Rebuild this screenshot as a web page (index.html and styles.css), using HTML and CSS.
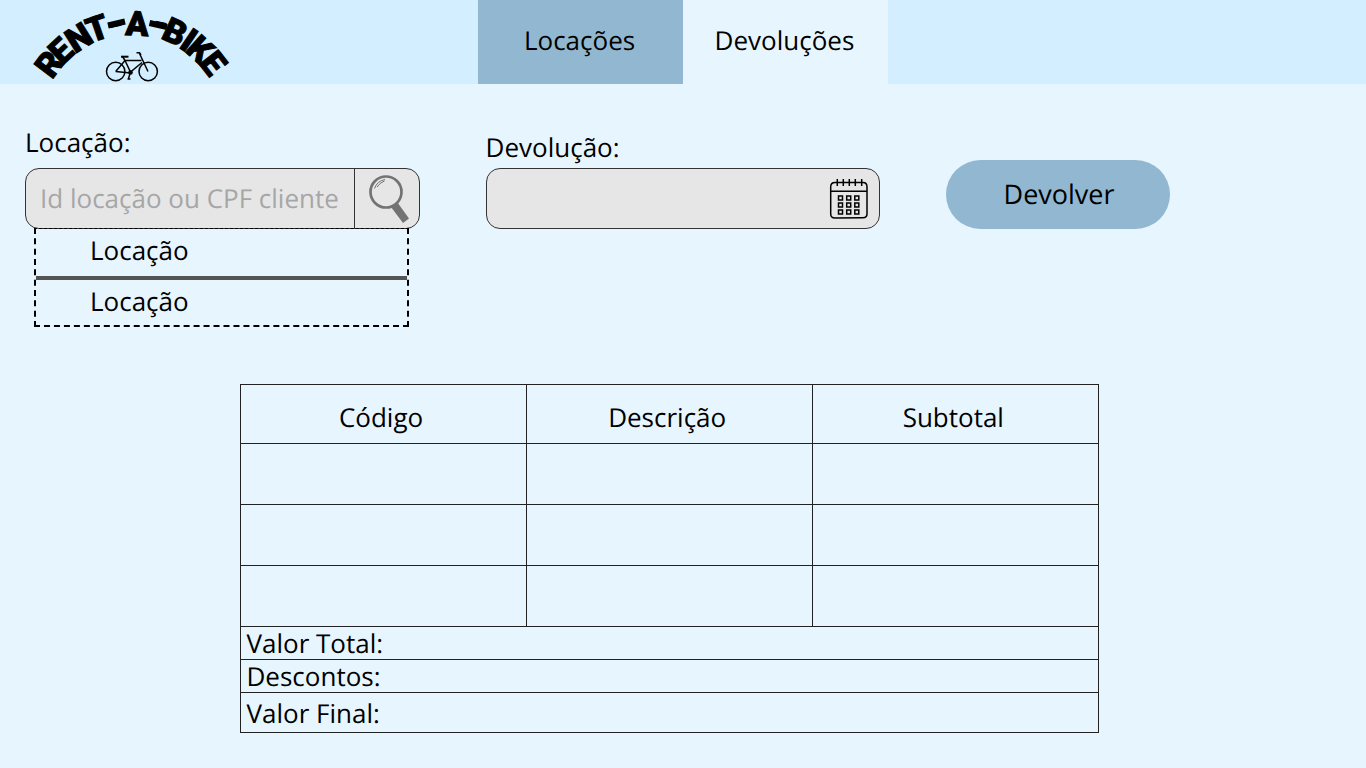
FILE: index.html
```html
<!DOCTYPE html>
<html lang="pt-BR">
<head>
<meta charset="utf-8">
<meta name="viewport" content="width=device-width, initial-scale=1">
<title>Rent-a-Bike - Devoluções</title>
<link rel="stylesheet" href="styles.css">
</head>
<body>
<header class="topbar">
  <svg class="logo" viewBox="0 0 240 84" role="img" aria-label="RENT-A-BIKE">
    <text class="logo-text" x="52 62 75 91 110 125 151 160 178 184 198" y="80 66 54 43 36 35 33 38 47 51 63" rotate="-53 -43 -32 -19 -12 3 12 25 34 42 52">RENT-A-BIKE</text>
    <path class="logo-dash" d="M108 25.500L125 21.500M149.500 23L167 27"/>
    <g class="logo-bike">
      <circle cx="115.7" cy="71.5" r="9.2"/>
      <circle cx="148.2" cy="71.5" r="9.2"/>
      <path d="M115.7 71.5L125 60.5H141.500M125 60.500L130.500 72L142 62.500M115.700 71.500L130.500 73M125 60.500L122.500 56.500M148 71.500L139.500 53.500M136.500 52.700H139.500L141 55M130.500 72L128.500 78.500M127.500 79H130.500"/>
      <path class="logo-seat" d="M121 56.700H128.500"/>
      <circle class="logo-hub" cx="130.500" cy="72.500" r="1.600"/>
    </g>
  </svg>
  <nav class="tabs">
    <a class="tab" href="#locacoes">Locações</a>
    <a class="tab tab-current" href="#devolucoes" aria-current="page">Devoluções</a>
  </nav>
</header>
<main class="content">
  <form class="return-form">
    <div class="field">
      <label class="label" for="rental">Locação:</label>
      <div class="control">
        <input class="input" id="rental" type="text" placeholder="Id locação ou CPF cliente">
        <button class="search-button" type="button" aria-label="Buscar">
          <svg class="search-icon" viewBox="0 0 44 50" aria-hidden="true">
            <circle cx="18" cy="18" r="15.500" fill="none" stroke="#737373" stroke-width="2.700"/>
            <path d="M6.500 14.500Q9 7 17 5.500M9 13Q12 8.500 16.500 7" fill="none" stroke="#737373" stroke-width="1"/>
            <path d="M23 33L29.500 28.500L41 44.500L35 49Z" fill="#737373"/>
          </svg>
        </button>
      </div>
      <ul class="options">
        <li class="option">Locação</li>
        <li class="option">Locação</li>
      </ul>
    </div>
    <div class="field">
      <label class="label label-date" for="date">Devolução:</label>
      <div class="control">
        <input class="input" id="date" type="text">
        <button class="date-button" type="button" aria-label="Abrir calendário">
          <svg class="date-icon" viewBox="0 0 40 42" fill="none" stroke="#000" aria-hidden="true">
            <path stroke-width="1.500" d="M6 4.500Q1.700 4.500 1.700 9V36Q1.700 40 6 40L34 39.700Q38 39.700 38 36V9Q38 4.500 34 4.500ZM1.700 13.300H38"/>
            <path stroke-width="1.500" d="M8.300 1V8M14.300 1V8M20.300 1V8M26.300 1V8M32.700 1V8"/>
            <path stroke-width="1.500" d="M9.500 18h4v4h-4zM17.700 18h4v4h-4zM25.800 18h4v4h-4zM9.500 25h4v4h-4zM17.700 25h4v4h-4zM25.800 25h4v4h-4zM9.500 32h4v4h-4zM17.700 32h4v4h-4zM25.800 32h4v4h-4z"/>
          </svg>
        </button>
      </div>
    </div>
    <button class="submit" type="submit">Devolver</button>
  </form>
  <table class="items">
    <thead>
      <tr><th scope="col">Código</th><th scope="col">Descrição</th><th scope="col">Subtotal</th></tr>
    </thead>
    <tbody>
      <tr><td></td><td></td><td></td></tr>
      <tr><td></td><td></td><td></td></tr>
      <tr><td></td><td></td><td></td></tr>
    </tbody>
    <tfoot>
      <tr><th scope="row" colspan="3">Valor Total:</th></tr>
      <tr><th scope="row" colspan="3">Descontos:</th></tr>
      <tr class="final"><th scope="row" colspan="3">Valor Final:</th></tr>
    </tfoot>
  </table>
</main>
</body>
</html>
```
FILE: styles.css
```css
* {
  box-sizing: border-box;
}

body {
  margin: 0;
  background: #e7f5ff;
  color: #000;
  font: 26px/36px "Open Sans", "Noto Sans", sans-serif;
  text-rendering: geometricPrecision;
}

button,
input {
  margin: 0;
  padding: 0;
  border: 0;
  background: none;
  color: inherit;
  font: inherit;
  text-rendering: inherit;
}

.topbar {
  display: grid;
  grid-template-columns: 35% 30%;
  height: 84px;
  background: #d3efff;
}

.logo {
  width: 240px;
  height: 84px;
  overflow: visible;
}

.logo-text {
  font: 900 34px Roboto, sans-serif;
  stroke: #000;
  stroke-width: 1;
}

.logo-dash {
  stroke: #000;
  stroke-width: 6;
}

.logo-bike {
  fill: none;
  stroke: #000;
  stroke-width: 1.5;
}

.logo-seat {
  stroke-width: 2;
}

.logo-hub {
  fill: #000;
}

.tabs {
  display: grid;
  grid-template-columns: 1fr 1fr;
}

.tab {
  display: flex;
  align-items: center;
  justify-content: center;
  padding: 0 2px 4px 0;
  background: #91b8d0;
  color: inherit;
  text-decoration: none;
}

.tab-current {
  background: #e7f5ff;
}

.content {
  padding: 40px 25px 35px;
}

.return-form {
  display: grid;
  grid-template-columns: 30% 30% 17%;
  column-gap: 5%;
  align-items: start;
}

.label {
  display: block;
  margin-bottom: 8px;
}

.label-date {
  margin: 5px 0 3px;
}

.control {
  display: flex;
  height: 61px;
  border: 1px solid #333;
  border-radius: 14px;
  background: #e6e6e6;
}

.input {
  flex: 1;
  min-width: 0;
  padding: 0 0 2px 14px;
}

.input::placeholder {
  color: #a6a6a6;
  opacity: 1;
}

.search-button {
  display: flex;
  align-items: center;
  justify-content: center;
  width: 65px;
  padding-left: 6px;
  border-left: 1px solid #333;
}

.search-icon {
  width: 44px;
  height: 50px;
}

.date-button {
  display: flex;
  align-items: center;
  justify-content: center;
  width: 60px;
}

.date-icon {
  width: 40px;
  height: 42px;
}

.options {
  margin: -1px 11px 0 9px;
  padding: 0;
  border: 2px dashed #000;
  border-top-width: 1px;
  list-style: none;
}

.option {
  padding: 3px 0 8px 54px;
}

.option + .option {
  padding-bottom: 6px;
  border-top: 4px solid #545454;
}

.submit {
  height: 69px;
  margin-top: 36px;
  padding: 0 0 2px 2px;
  border-radius: 35px;
  background: #91b8d0;
  font-size: 27px;
}

.items {
  width: 65.3%;
  margin: 57px 0 0 16.3%;
  border-collapse: collapse;
  table-layout: fixed;
}

.items th,
.items td {
  padding: 0;
  border: 1px solid #222;
  font-weight: 400;
}

.items thead th {
  height: 59px;
  padding: 6px 4px 0 0;
}

.items td {
  height: 61px;
}

.items tfoot th {
  height: 33px;
  padding-left: 6px;
  line-height: 32px;
  text-align: left;
}

.items .final th {
  height: 40px;
}
```
